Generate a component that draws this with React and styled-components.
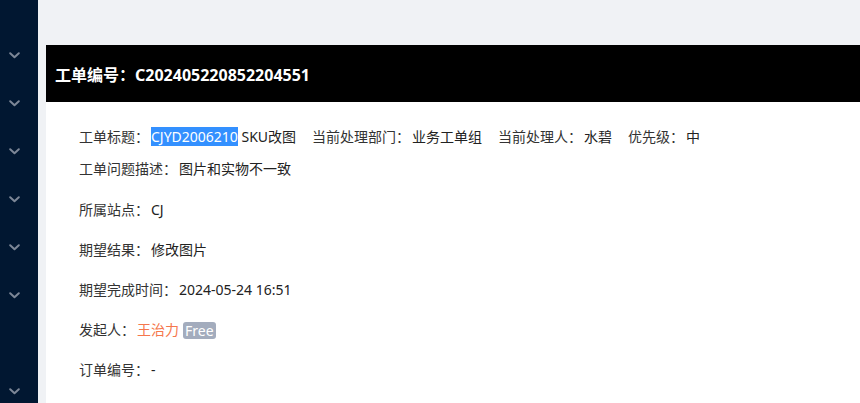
import React from 'react';
import styled, { createGlobalStyle } from 'styled-components';

const GlobalStyle = createGlobalStyle`
  html, body {
    margin: 0;
    padding: 0;
    height: 100%;
    overflow: hidden;
    font-family: "Noto Sans", "Noto Sans CJK SC", sans-serif;
  }
  #root {
    height: 100%;
  }
`;

const Layout = styled.div`
  display: flex;
  height: 403px;
  width: 860px;
  overflow: hidden;
`;

const Sidebar = styled.nav`
  width: 38px;
  flex-shrink: 0;
  background: #011731;
  display: flex;
  flex-direction: column;
  padding-top: 52px;
`;

const MenuItem = styled.div`
  height: 48px;
  flex-shrink: 0;
  display: flex;
  justify-content: center;
  align-items: flex-start;
  padding-right: 9px;
  visibility: ${p => (p.$hidden ? 'hidden' : 'visible')};
`;

const Main = styled.main`
  flex: 1;
  background: #f0f2f5;
  padding: 45px 0 0 8px;
`;

const Panel = styled.section`
  background: #fff;
  width: 830px;
  min-height: 400px;
`;

const PanelHeader = styled.header`
  background: #000;
  height: 57px;
  display: flex;
  align-items: center;
  padding-left: 9px;
  box-sizing: border-box;
  color: #fff;
  font-size: 16px;
  font-weight: 700;
`;

const Body = styled.div`
  padding: 24px 0 0 33px;
  font-size: 14px;
  color: #222;
`;

const Row = styled.div`
  display: flex;
  align-items: center;
  line-height: 22px;
  margin-bottom: ${p => p.$gap}px;
`;

const Field = styled.span`
  margin-right: 16px;
  white-space: nowrap;
`;

const Label = styled.span`
  color: ${p => (p.$red ? '#f5222d' : '#333')};
`;

const Value = styled.span`
  margin-left: 2px;
  color: ${p => p.$color || '#222'};
`;

const Selected = styled.span`
  background: #3390ff;
  color: #fff;
`;

const Badge = styled.span`
  display: inline-block;
  margin-left: 4px;
  padding: 0 2px;
  line-height: 17px;
  border-radius: 3px;
  background: #a3acbd;
  color: #fff;
  font-size: 14px;
`;

const Chevron = () => (
  <svg width="11" height="7" viewBox="0 0 11 7" fill="none">
    <path d="M1.2 1.2 L5.5 5.2 L9.8 1.2" stroke="#7d8797" strokeWidth="2" strokeLinecap="round" strokeLinejoin="round" />
  </svg>
);

const menu = [false, false, false, false, false, false, true, false];

export default function App() {
  return (
    <Layout>
      <GlobalStyle />
      <Sidebar>
        {menu.map((hidden, i) => (
          <MenuItem key={i} $hidden={hidden}>
            <Chevron />
          </MenuItem>
        ))}
      </Sidebar>
      <Main>
        <Panel>
          <PanelHeader>工单编号：C202405220852204551</PanelHeader>
          <Body>
            <Row $gap={10}>
              <Field>
                <Label>工单标题：</Label>
                <Value><Selected>CJYD2006210</Selected> SKU改图</Value>
              </Field>
              <Field>
                <Label>当前处理部门：</Label>
                <Value>业务工单组</Value>
              </Field>
              <Field>
                <Label>当前处理人：</Label>
                <Value>水碧</Value>
              </Field>
              <Field>
                <Label>优先级：</Label>
                <Value>中</Value>
              </Field>
            </Row>
            <Row $gap={19}>
              <Label>工单问题描述：</Label>
              <Value>图片和实物不一致</Value>
            </Row>
            <Row $gap={18}>
              <Label>所属站点：</Label>
              <Value>CJ</Value>
            </Row>
            <Row $gap={18}>
              <Label>期望结果：</Label>
              <Value>修改图片</Value>
            </Row>
            <Row $gap={18}>
              <Label>期望完成时间：</Label>
              <Value>2024-05-24 16:51</Value>
            </Row>
            <Row $gap={18}>
              <Label>发起人：</Label>
              <Value $color="#f5774d">王治力</Value>
              <Badge>Free</Badge>
            </Row>
            <Row $gap={18}>
              <Label>订单编号：</Label>
              <Value>-</Value>
            </Row>
            <Row $gap={18}>
              <Label $red>*附件：</Label>
            </Row>
          </Body>
        </Panel>
      </Main>
    </Layout>
  );
}
